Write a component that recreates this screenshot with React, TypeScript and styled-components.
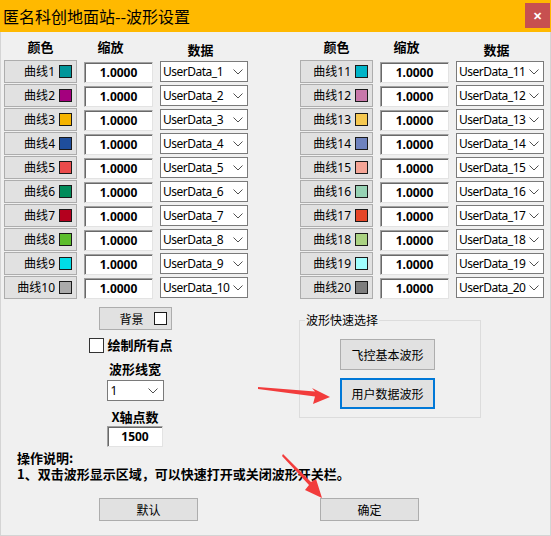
import React from 'react';
import styled, { createGlobalStyle } from 'styled-components';

const GlobalStyle = createGlobalStyle`
  html, body {
    margin: 0;
    padding: 0;
    background: #f0f0f0;
  }
  body {
    font-family: "Noto Sans", "Noto Sans CJK SC", sans-serif;
    font-size: 12px;
    color: #000;
  }
`;

type Curve = {
  id: number;
  color: string;
};

const colors = [
  '#00969a', '#a4007e', '#f5b400', '#1f4e9c', '#eb4b4b',
  '#008c5a', '#b4001e', '#5dbe2d', '#00dce6', '#aaaaaa',
  '#00b4c8', '#c878aa', '#f5c850', '#6e82be', '#f5a596',
  '#96d2b4', '#e64628', '#aad282', '#a0ffff', '#7d7d7d'
];

const curves: Curve[] = colors.map((color, i) => ({ id: i + 1, color }));

function Chevron() {
  return (
    <svg width="10" height="6" viewBox="0 0 10 6">
      <path d="M0.5 0.5 L5 5 L9.5 0.5" fill="none" stroke="#505050" strokeWidth="1" />
    </svg>
  );
}

function CurveTable({ items }: { items: Curve[] }) {
  return (
    <Column>
      <HeadCell>颜色</HeadCell>
      <HeadCell $shift={16}>缩放</HeadCell>
      <HeadCell $shift={7} $drop={3}>数据</HeadCell>
      {items.map((c) => (
        <React.Fragment key={c.id}>
          <ColorButton>
            <span>
              曲线<Num>{c.id}</Num>
            </span>
            <Swatch $color={c.color} />
          </ColorButton>
          <ScaleInput>1.0000</ScaleInput>
          <DataSelect>
            <SelectText>UserData_{c.id}</SelectText>
            <Chevron />
          </DataSelect>
        </React.Fragment>
      ))}
    </Column>
  );
}

function App() {
  return (
    <>
      <GlobalStyle />
      <Window>
        <TitleBar>
          <Title>匿名科创地面站--波形设置</Title>
          <CloseButton>✕</CloseButton>
        </TitleBar>
        <Body>
          <Columns>
            <CurveTable items={curves.slice(0, 10)} />
            <CurveTable items={curves.slice(10)} />
          </Columns>

          <Options>
            <LeftControls>
              <BgButton>
                <span>背景</span>
                <Swatch $color="#ffffff" />
              </BgButton>
              <CheckRow>
                <CheckBox />
                <BoldLabel>绘制所有点</BoldLabel>
              </CheckRow>
              <FieldLabel>波形线宽</FieldLabel>
              <SmallSelect>
                <SelectText>1</SelectText>
                <Chevron />
              </SmallSelect>
              <FieldLabel>X轴点数</FieldLabel>
              <PointsInput>1500</PointsInput>
            </LeftControls>

            <QuickGroup>
              <Legend>波形快速选择</Legend>
              <QuickList>
                <QuickButton>飞控基本波形</QuickButton>
                <QuickButton $focused>用户数据波形</QuickButton>
              </QuickList>
            </QuickGroup>
          </Options>

          <Notes>
            <NoteLine>操作说明:</NoteLine>
            <NoteLine>1、双击波形显示区域，可以快速打开或关闭波形开关栏。</NoteLine>
          </Notes>

          <Footer>
            <DialogButton>默认</DialogButton>
            <DialogButton>确定</DialogButton>
          </Footer>
        </Body>

        <Arrows width="551" height="536" viewBox="0 0 551 536">
          <polygon
            points="258,387 315,391.5 312,388 330,397 313,404 315,396.5 258,389"
            fill="#f23c3c"
          />
          <polygon
            points="283,454 311,482 316,479 322,498 305,490 309,485 282,456"
            fill="#f23c3c"
          />
        </Arrows>
      </Window>
    </>
  );
}

const Window = styled.div`
  position: relative;
  width: 551px;
  height: 536px;
  display: flex;
  flex-direction: column;
  overflow: hidden;
`;

const TitleBar = styled.div`
  height: 32px;
  flex-shrink: 0;
  background: #ffb900;
  display: flex;
  justify-content: space-between;
  align-items: flex-start;
`;

const Title = styled.div`
  font-family: "Noto Sans CJK SC", sans-serif;
  font-size: 16px;
  line-height: 32px;
  padding-left: 3px;
  color: #000;
`;

const CloseButton = styled.div`
  width: 25px;
  height: 25px;
  margin: 3px 1px 0 0;
  background: #c75050;
  color: #fff;
  font-size: 11px;
  font-weight: bold;
  display: flex;
  align-items: center;
  justify-content: center;
`;

const Body = styled.div`
  flex: 1;
  box-sizing: border-box;
  border: 1px solid #d4d4d4;
  border-top: none;
  padding-left: 3px;
  display: flex;
  flex-direction: column;
`;

const Columns = styled.div`
  display: flex;
  gap: 52px;
`;

const Column = styled.div`
  display: grid;
  grid-template-columns: 73px 69px 88px;
  grid-auto-rows: 24px;
  grid-template-rows: 28px;
  column-gap: 7px;
`;

const HeadCell = styled.div<{ $shift?: number; $drop?: number }>`
  font-family: "Noto Sans CJK SC", sans-serif;
  font-size: 13px;
  font-weight: bold;
  line-height: 16px;
  text-align: center;
  padding-top: ${(p) => 7 + (p.$drop ?? 0)}px;
  padding-right: ${(p) => p.$shift ?? 0}px;
`;

const Swatch = styled.span<{ $color: string }>`
  display: inline-block;
  box-sizing: border-box;
  width: 13px;
  height: 13px;
  border: 1px solid #1a1a1a;
  background: ${(p) => p.$color};
`;

const GreyButton = styled.div`
  box-sizing: border-box;
  background: #e1e1e1;
  border: 1px solid #adadad;
  font-family: "Noto Sans CJK SC", sans-serif;
  font-size: 12px;
  display: flex;
  align-items: center;
`;

const ColorButton = styled(GreyButton)`
  height: 23px;
  justify-content: flex-end;
  gap: 4px;
  padding-right: 4px;
  line-height: 1;
`;

const Num = styled.span`
  font-family: "Noto Sans", sans-serif;
  font-size: 12px;
`;

const SunkenField = styled.div`
  box-sizing: border-box;
  background: #fff;
  border-top: 1px solid #a0a0a0;
  border-left: 1px solid #a0a0a0;
  border-right: 1px solid #e3e3e3;
  border-bottom: 1px solid #e3e3e3;
  box-shadow: inset 1px 1px 0 #696969;
  font-family: "Noto Sans", sans-serif;
  font-weight: bold;
  font-size: 12px;
  display: flex;
  align-items: center;
  justify-content: center;
`;

const ScaleInput = styled(SunkenField)`
  height: 21px;
  margin-top: 2px;
`;

const SelectBox = styled.div`
  box-sizing: border-box;
  height: 21px;
  background: #fff;
  border: 1px solid #7a7a7a;
  display: flex;
  align-items: center;
  justify-content: space-between;
  padding: 0 4px 0 2px;
`;

const SelectText = styled.span`
  font-family: "Noto Sans", sans-serif;
  font-size: 12px;
  letter-spacing: -0.5px;
  white-space: nowrap;
`;

const DataSelect = styled(SelectBox)`
  margin-top: 1px;
`;

const Options = styled.div`
  display: flex;
  margin-top: 7px;
  gap: 33px;
`;

const LeftControls = styled.div`
  width: 262px;
  display: flex;
  flex-direction: column;
  align-items: center;
`;

const BgButton = styled(GreyButton)`
  width: 73px;
  height: 23px;
  justify-content: flex-end;
  gap: 10px;
  padding-right: 4px;
`;

const CheckRow = styled.div`
  display: flex;
  align-items: center;
  gap: 3px;
  margin-top: 7px;
  margin-right: 8px;
`;

const CheckBox = styled.span`
  box-sizing: border-box;
  width: 15px;
  height: 15px;
  background: #fff;
  border: 1px solid #333;
`;

const BoldLabel = styled.span`
  font-family: "Noto Sans CJK SC", sans-serif;
  font-size: 13px;
  font-weight: bold;
  line-height: 16px;
`;

const FieldLabel = styled(BoldLabel)`
  display: block;
  margin-top: 8px;
`;

const SmallSelect = styled(SelectBox)`
  width: 57px;
  margin-top: 3px;
  padding: 0 5px 0 3px;
`;

const PointsInput = styled(SunkenField)`
  width: 56px;
  height: 21px;
  margin-top: 1px;
`;

const QuickGroup = styled.fieldset`
  box-sizing: border-box;
  width: 182px;
  height: 105px;
  margin: 6px 0 0 0;
  padding: 0;
  border: 1px solid #dcdcdc;
  display: block;
`;

const Legend = styled.legend`
  font-family: "Noto Sans CJK SC", sans-serif;
  font-size: 12px;
  line-height: 14px;
  padding: 0 1px;
  margin: 0 0 0 5px;
  text-align: left;
`;

const QuickList = styled.div`
  display: flex;
  flex-direction: column;
  gap: 8px;
  padding: 12px 0 0 40px;
`;

const QuickButton = styled(GreyButton)<{ $focused?: boolean }>`
  width: 95px;
  height: 31px;
  justify-content: center;
  border: ${(p) => (p.$focused ? '2px solid #0078d7' : '1px solid #adadad')};
`;

const Notes = styled.div`
  margin-top: 3px;
  padding-left: 13px;
  font-family: "Noto Sans CJK SC", sans-serif;
  font-size: 13px;
  font-weight: bold;
  line-height: 16px;
`;

const NoteLine = styled.p`
  margin: 0;
  white-space: nowrap;
`;

const Footer = styled.div`
  display: flex;
  gap: 122px;
  padding-left: 95px;
  margin-top: 16px;
`;

const DialogButton = styled(GreyButton)`
  width: 99px;
  height: 23px;
  justify-content: center;
`;

const Arrows = styled.svg`
  position: absolute;
  left: 0;
  top: 0;
  pointer-events: none;
`;

export default App;
